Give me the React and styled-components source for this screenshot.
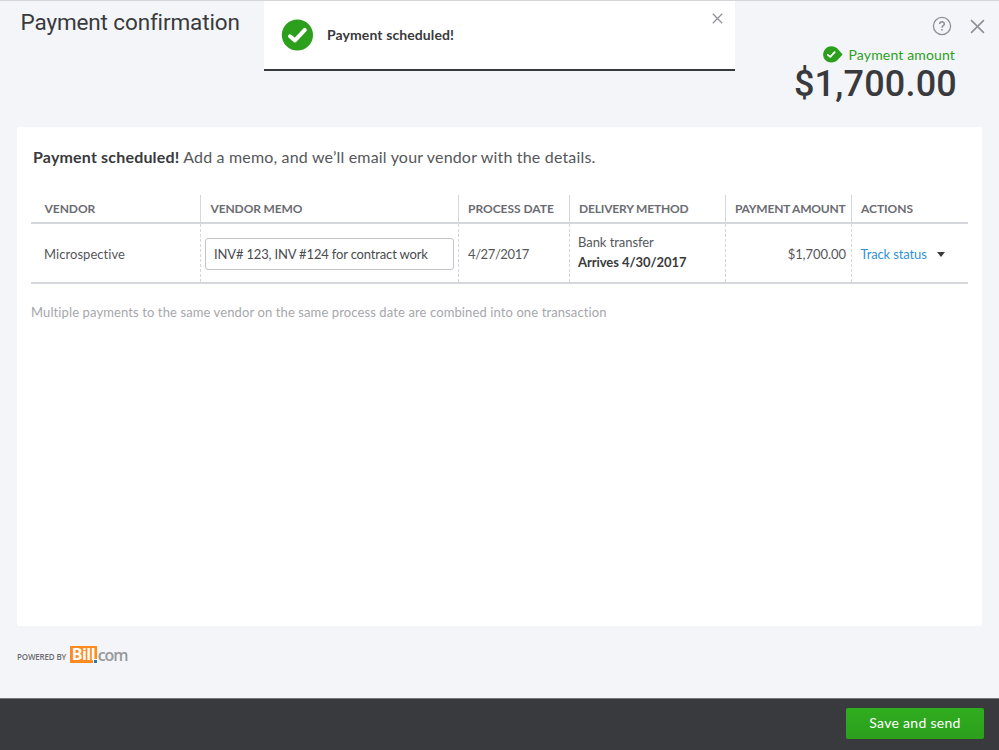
import React from 'react'
import styled, { createGlobalStyle } from 'styled-components'

const GlobalStyle = createGlobalStyle`
    * {
        box-sizing: border-box;
    }
    body {
        margin: 0;
        color: #393a3d;
        font-family: Lato, "Liberation Sans", sans-serif;
        font-size: 13px;
    }
`

const Page = styled.div`
    display: flex;
    flex-direction: column;
    position: relative;
    width: 999px;
    height: 750px;
    overflow: hidden;
    background: #f4f5f9;
    border-top: 1px solid #d5d6d9;
    white-space: nowrap;
`

const Header = styled.header`
    display: flex;
    justify-content: space-between;
    height: 126px;
    padding: 8px 14px 0 20.5px;
`

const Title = styled.h1`
    margin: 0;
    font: 400 22.5px/27px Roboto, sans-serif;
    letter-spacing: -0.13px;
`

const HeaderRight = styled.div`
    display: flex;
    flex-direction: column;
    align-items: flex-end;
`

const HeaderIcons = styled.div`
    display: flex;
    align-items: center;
    gap: 18px;
    height: 34px;
`

const IconButton = styled.button`
    display: flex;
    padding: 0;
    border: 0;
    background: none;
    color: #8d9096;
`

const AmountLabel = styled.div`
    display: flex;
    align-items: center;
    gap: 6px;
    height: 22px;
    margin-right: 30px;
    color: #2ca01c;
    font-size: 14px;
    letter-spacing: 0.15px;
`

const Amount = styled.div`
    margin-right: 28px;
    font: 500 36px/38px Roboto, sans-serif;
    letter-spacing: 0.2px;
`

const Toast = styled.div`
    position: absolute;
    top: 0;
    left: 264px;
    display: flex;
    align-items: center;
    width: 471px;
    height: 70px;
    padding-left: 17px;
    background: #fff;
    border-bottom: 2px solid #393a3d;
`

const ToastText = styled.span`
    flex: 1;
    margin-left: 14px;
    padding-bottom: 2px;
    font-size: 14px;
    font-weight: 700;
    letter-spacing: 0.1px;
`

const ToastClose = styled(IconButton)`
    align-self: flex-start;
    margin: 12px 12px 0 0;
`

const Card = styled.main`
    width: 965px;
    height: 499px;
    margin-left: 17px;
    padding: 19px 14px;
    background: #fff;
    border-radius: 2px;
`

const Intro = styled.p`
    margin: 0 0 0 2px;
    color: #55575b;
    font-size: 16px;
    line-height: 22px;
    letter-spacing: 0.18px;

    b {
        color: #393a3d;
    }
`

const Row = styled.div`
    display: grid;
    grid-template-columns: 169px 258px 111px 156px 126px 117px;
    border-bottom: 2px solid #d4d7dc;
`

const HeadRow = styled(Row)`
    height: 29px;
    margin-top: 27px;
`

const BodyRow = styled(Row)`
    height: 60px;
`

const HeadCell = styled.div`
    padding-left: ${props => props.$left || '9px'};
    border-left: ${props => props.$first ? '0' : '1px solid #d4d7dc'};
    color: #6b6c72;
    font-size: 12px;
    font-weight: 700;
    line-height: 27px;
    letter-spacing: ${props => props.$spacing || '-0.17px'};
`

const Cell = styled.div`
    display: flex;
    align-items: center;
    justify-content: ${props => props.$right ? 'flex-end' : 'flex-start'};
    padding: ${props => props.$pad || '2px 0 0 9px'};
    border-left: ${props => props.$first ? '0' : '1px dashed #d4d7dc'};
    color: #55575b;
    letter-spacing: ${props => props.$spacing || '0.05px'};
`

const MemoInput = styled.input`
    width: 249px;
    height: 32px;
    padding: 0 8px;
    border: 1px solid #c1c4cd;
    border-radius: 3px;
    color: #4a4b4f;
    font: inherit;
    letter-spacing: -0.16px;
`

const Delivery = styled.div`
    line-height: 19.5px;

    b {
        display: block;
        color: #393a3d;
    }
`

const TrackLink = styled.a`
    color: #3392d6;
`

const Caret = styled.span`
    margin: 1px 0 0 10px;
    border: 4.5px solid transparent;
    border-top: 5px solid #393a3d;
    border-bottom: 0;
`

const Note = styled.p`
    margin: 19px 0 0;
    color: #a6a7ab;
    line-height: 18px;
    letter-spacing: 0.11px;
`

const Powered = styled.div`
    display: flex;
    align-items: flex-end;
    height: 36px;
    margin: 0 0 36px 17px;
    color: #6b6c72;
    font: 600 8px/10px "Open Sans", sans-serif;
    letter-spacing: -0.16px;
`

const Brand = styled.span`
    display: flex;
    margin: 0 0 -2px 3.5px;
    font: 700 16px/17px "Open Sans", sans-serif;
`

const BrandBill = styled.span`
    position: relative;
    width: 27px;
    height: 17px;
    padding-left: 2px;
    background: #ff8a1f;
    color: #fff;
    letter-spacing: -0.5px;

    &::after {
        content: '';
        position: absolute;
        right: 0;
        bottom: 0;
        width: 3px;
        height: 3px;
        background: #2478bd;
        outline: 1px solid #fff;
    }
`

const BrandCom = styled.span`
    padding-left: 1px;
    color: #97989a;
    font-weight: 600;
    font-size: 16px;
    line-height: 18px;
    letter-spacing: -1.1px;
`

const Footer = styled.footer`
    display: flex;
    align-items: flex-start;
    justify-content: flex-end;
    height: 52px;
    margin-top: auto;
    padding: 9px 15px 0 0;
    background: #393a3d;
    border-top: 1px solid #77787b;
`

const SaveButton = styled.button`
    width: 138px;
    height: 31px;
    padding: 0 0 2px;
    border: 0;
    border-radius: 2px;
    background: linear-gradient(#30ad20, #2c9f1d);
    color: #fff;
    font: 400 14px Lato, sans-serif;
    letter-spacing: 0.3px;
`

const CloseIcon = ({ size, width }) => (
    <svg width={size} height={size} viewBox="0 0 14 14" fill="none" stroke="currentColor" strokeWidth={width}>
        <path d="M1 1 L13 13 M13 1 L1 13" />
    </svg>
)

const HelpIcon = () => (
    <svg width="20" height="20" viewBox="0 0 20 20" fill="none" stroke="currentColor" strokeWidth="1.3">
        <circle cx="10" cy="10" r="8.6" />
        <path d="M7.7 8.1 C7.7 5 12.3 5.1 12.3 7.9 C12.3 9.6 10 9.6 10 11.7" strokeWidth="1.5" />
        <circle cx="10" cy="13.8" r="0.9" fill="currentColor" stroke="none" />
    </svg>
)

const SuccessIcon = () => (
    <svg width="32" height="32" viewBox="0 0 32 32" fill="none">
        <circle cx="16.4" cy="16" r="15.6" fill="#2ca01c" />
        <path d="M9 17.3 L14 21.4 L23.8 10.9" stroke="#fff" strokeWidth="4" strokeLinecap="round" strokeLinejoin="round" />
    </svg>
)

const PaidIcon = () => (
    <svg width="20" height="17" viewBox="0 0 20 17" fill="none">
        <path d="M8.2 0.3 C11.5 0.3 13.8 1.8 15.5 3.8 L19.6 8.5 L15.5 13 C13.8 15 11.5 16.6 8.2 16.6 A8.1 8.1 0 0 1 8.2 0.3 Z" fill="#2ca01c" />
        <path d="M4.8 8.9 L7.2 10.9 L11.7 6.1" stroke="#fff" strokeWidth="1.8" strokeLinecap="round" strokeLinejoin="round" />
    </svg>
)

const PaymentsTable = () => (
    <div>
        <HeadRow>
            <HeadCell $first $left="13.5px" $spacing="-0.05px">VENDOR</HeadCell>
            <HeadCell $left="9.5px" $spacing="-0.12px">VENDOR MEMO</HeadCell>
            <HeadCell $spacing="-0.02px">PROCESS DATE</HeadCell>
            <HeadCell>DELIVERY METHOD</HeadCell>
            <HeadCell $spacing="-0.22px">PAYMENT AMOUNT</HeadCell>
            <HeadCell $spacing="-0.05px">ACTIONS</HeadCell>
        </HeadRow>
        <BodyRow>
            <Cell $first $pad="2px 0 0 13px">Microspective</Cell>
            <Cell $pad="2px 0 0 4px">
                <MemoInput defaultValue="INV# 123, INV #124 for contract work" />
            </Cell>
            <Cell $spacing="-0.4px">4/27/2017</Cell>
            <Cell $pad="0 0 1px 8px" $spacing="-0.06px">
                <Delivery>Bank transfer<b>Arrives 4/30/2017</b></Delivery>
            </Cell>
            <Cell $right $pad="2px 5px 0 0" $spacing="-0.05px">$1,700.00</Cell>
            <Cell $pad="2px 0 0 8.5px" $spacing="-0.12px">
                <TrackLink>Track status</TrackLink>
                <Caret />
            </Cell>
        </BodyRow>
    </div>
)

class App extends React.Component {
    render() {
        return (
            <Page>
                <GlobalStyle />
                <Header>
                    <Title>Payment confirmation</Title>
                    <HeaderRight>
                        <HeaderIcons>
                            <IconButton aria-label="Help"><HelpIcon /></IconButton>
                            <IconButton aria-label="Close"><CloseIcon size={15} width={1.5} /></IconButton>
                        </HeaderIcons>
                        <AmountLabel><PaidIcon />Payment amount</AmountLabel>
                        <Amount>$1,700.00</Amount>
                    </HeaderRight>
                </Header>
                <Toast>
                    <SuccessIcon />
                    <ToastText>Payment scheduled!</ToastText>
                    <ToastClose aria-label="Dismiss"><CloseIcon size={11} width={1.5} /></ToastClose>
                </Toast>
                <Card>
                    <Intro><b>Payment scheduled!</b> Add a memo, and we’ll email your vendor with the details.</Intro>
                    <PaymentsTable />
                    <Note>Multiple payments to the same vendor on the same process date are combined into one transaction</Note>
                </Card>
                <Powered>
                    POWERED BY
                    <Brand>
                        <BrandBill>Bill</BrandBill>
                        <BrandCom>com</BrandCom>
                    </Brand>
                </Powered>
                <Footer>
                    <SaveButton>Save and send</SaveButton>
                </Footer>
            </Page>
        )
    }
}

export default App
